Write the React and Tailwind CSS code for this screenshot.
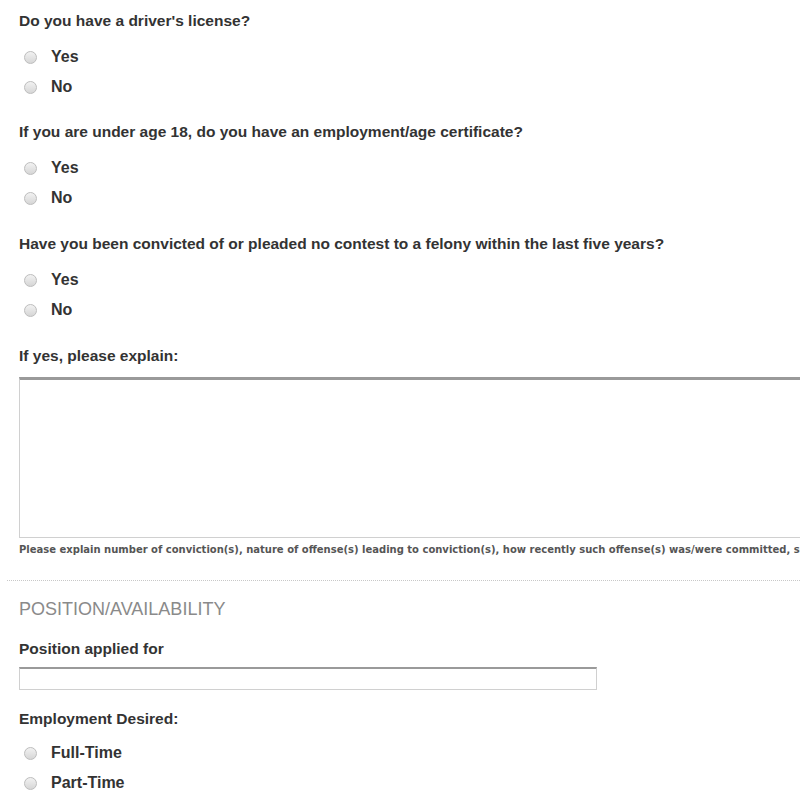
import React from "react";

function Radio({ label }) {
  return (
    <label className="flex items-center h-[30px]">
      <span className="ml-[5px] w-[13px] h-[13px] rounded-full border border-[#bdbdbd] bg-gradient-to-b from-[#f2f2f2] to-[#d6d6d6]" />
      <span className="ml-[14px] text-[16px] font-bold text-[#333]">{label}</span>
    </label>
  );
}

function Question({ text, options, className, gap = "mt-[12px]" }) {
  return (
    <div className={className}>
      <p className="text-[15.5px] font-bold text-[#333] leading-[18px]">{text}</p>
      <div className={gap + " flex flex-col"}>
        {options.map((o) => (
          <Radio key={o} label={o} />
        ))}
      </div>
    </div>
  );
}

export default function App() {
  return (
    <div className="w-[800px] h-[800px] overflow-hidden bg-white font-['Liberation_Sans',Arial,sans-serif]">
      <div className="pl-[19px] pt-[12px]">
        <Question text="Do you have a driver's license?" options={["Yes", "No"]} />
        <Question className="mt-[21px]" text="If you are under age 18, do you have an employment/age certificate?" options={["Yes", "No"]} />
        <Question className="mt-[22px]" text="Have you been convicted of or pleaded no contest to a felony within the last five years?" options={["Yes", "No"]} />
        <p className="mt-[22px] text-[15.5px] font-bold text-[#333] leading-[18px]">If yes, please explain:</p>
        <div className="mt-[12px] w-[800px] h-[161px] border border-[#d0d0d0] border-t-[3px] border-t-[#9a9a9a]" />
        <p className="mt-[4px] whitespace-nowrap text-[10px] font-bold text-[#555] tracking-[0px] font-['DejaVu_Sans',Verdana,sans-serif]">
          Please explain number of conviction(s), nature of offense(s) leading to conviction(s), how recently such offense(s) was/were committed, sentence received, and whether all sentence requirements have been met.
        </p>
      </div>
      <div className="mt-[23px] ml-[7px] border-t border-dotted border-[#c8c8c8]" />
      <div className="pl-[19px]">
        <h2 className="mt-[17px] text-[18px] text-[#8a8a8a] leading-[22px]">POSITION/AVAILABILITY</h2>
        <p className="mt-[20px] text-[15.5px] font-bold text-[#333] leading-[18px]">Position applied for</p>
        <div className="mt-[9px] w-[578px] h-[23px] border border-[#d0d0d0] border-t-2 border-t-[#9a9a9a]" />
        <Question className="mt-[20px]" gap="mt-[10px]" text="Employment Desired:" options={["Full-Time", "Part-Time"]} />
      </div>
    </div>
  );
}
